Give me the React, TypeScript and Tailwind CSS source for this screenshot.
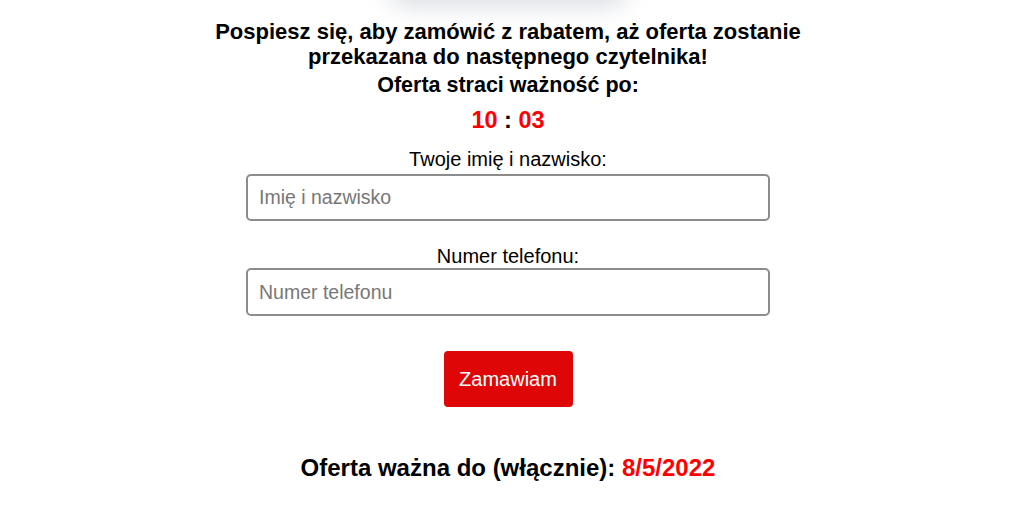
export default function App() {
  return (
    <div className="min-h-screen bg-white flex flex-col items-center pr-2 overflow-hidden font-['Liberation_Sans',Arial,sans-serif] text-black">
      <div className="w-[240px] h-[40px] -mt-[34px] rounded-full bg-gray-300 blur-md opacity-80" />

      <div className="w-[640px] mt-[13px] text-center text-[22px] font-bold leading-[25px]">
        Pospiesz się, aby zamówić z rabatem, aż oferta zostanie przekazana do następnego czytelnika!
      </div>
      <div className="mt-[4px] text-center text-[21.5px] font-bold leading-[25px]">Oferta straci ważność po:</div>
      <div className="mt-[9px] text-center text-[23.5px] font-bold leading-[27px]">
        <span className="text-[#ff0000]">10</span> : <span className="text-[#ff0000]">03</span>
      </div>

      <form className="w-[524px] mt-[14px] flex flex-col items-center">
        <label className="text-[20px] leading-[23px]">Twoje imię i nazwisko:</label>
        <input
          className="mt-[3px] w-full h-[47px] rounded-[5px] border-2 border-[#8c8c8c] px-[11px] text-[19.5px] placeholder:text-[#777] outline-none"
          placeholder="Imię i nazwisko"
        />
        <label className="mt-[24px] text-[20px] leading-[23px]">Numer telefonu:</label>
        <input
          className="mt-[0px] w-full h-[48px] rounded-[5px] border-2 border-[#8c8c8c] px-[11px] text-[19.5px] placeholder:text-[#777] outline-none"
          placeholder="Numer telefonu"
        />
        <button
          type="button"
          className="mt-[35px] w-[129px] h-[56px] rounded-[4px] bg-[#de0606] text-white text-[20px]"
        >
          Zamawiam
        </button>
      </form>

      <div className="mt-[47px] text-[24px] font-bold leading-[28px]">
        Oferta ważna do (włącznie): <span className="text-[#ff0000]">8/5/2022</span>
      </div>
    </div>
  )
}
